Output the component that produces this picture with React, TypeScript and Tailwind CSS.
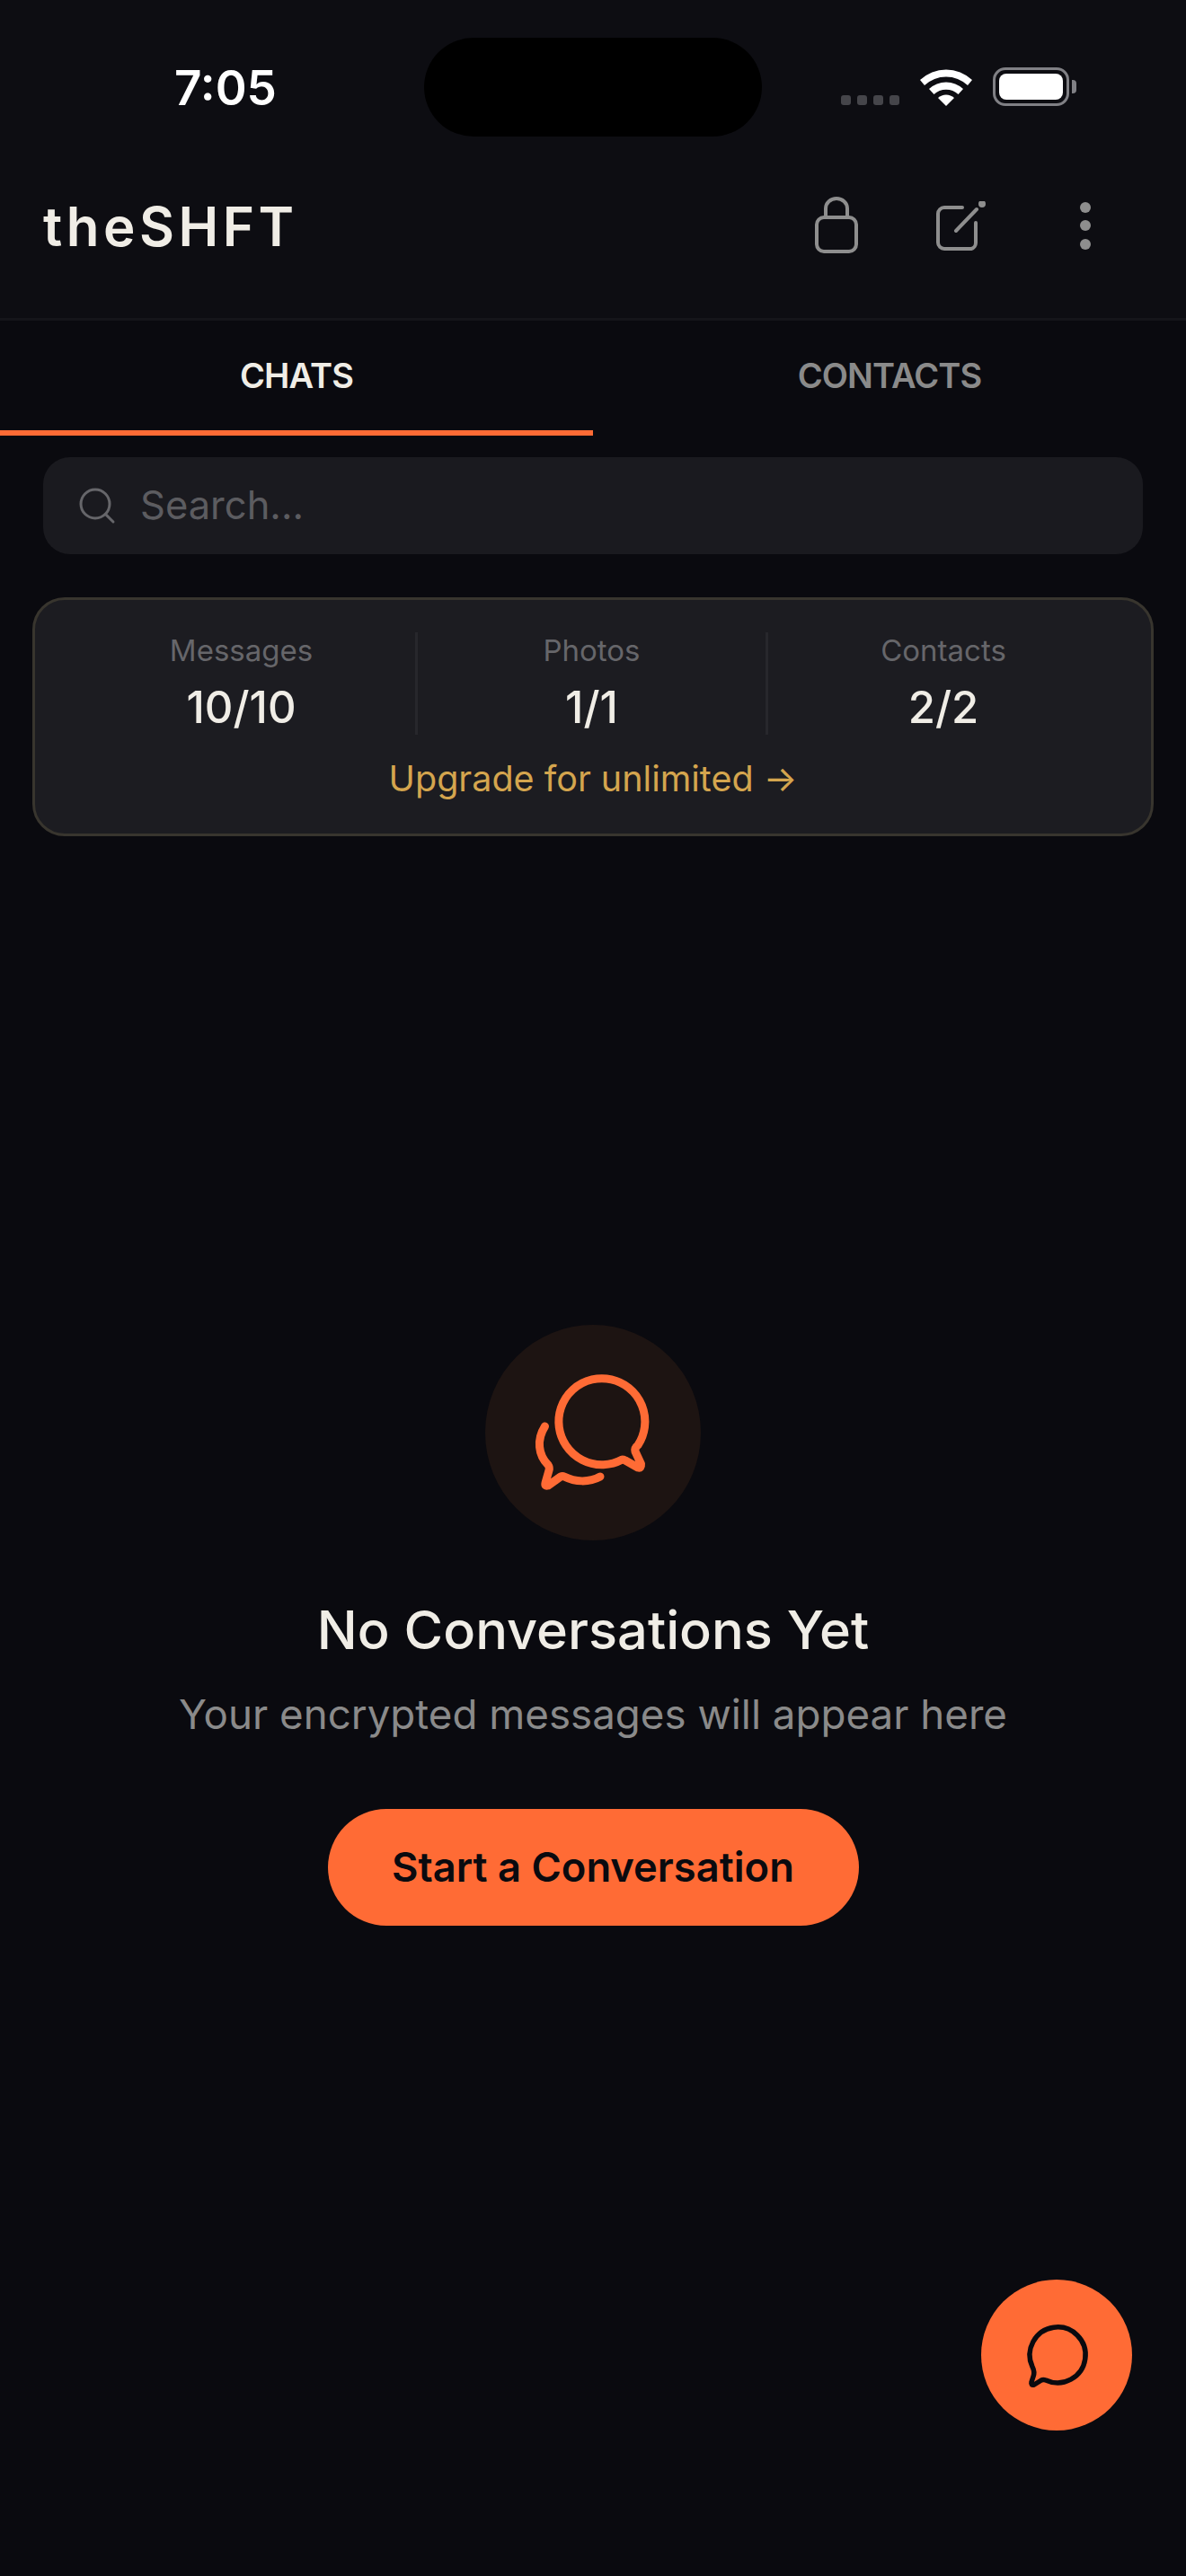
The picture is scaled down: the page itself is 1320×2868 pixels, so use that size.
import React from "react";
import { Search } from "lucide-react";

const StatusBar = () => (
  <div className="relative flex h-[168px] items-start justify-between">
    <span className="ml-[194px] mt-[66px] text-[53px] font-semibold leading-[64px] text-white">
      7:05
    </span>
    <div className="absolute left-[472px] top-[42px] h-[110px] w-[376px] rounded-[55px] bg-black" />
    <div className="mr-[122px] mt-[75px] flex items-start">
      <div className="mr-[23px] mt-[31px] flex gap-[7px]">
        {[0, 1, 2, 3].map((i) => (
          <div key={i} className="h-[11px] w-[11px] rounded-[3px] bg-[#45454a]" />
        ))}
      </div>
      <svg width="58" height="43" viewBox="0 0 58 43" className="mr-[23px]">
        <path d="M0 14 A42 42 0 0 1 58 14 L53 20 A35 35 0 0 0 5 20 Z" fill="#fff" />
        <path d="M10 24 A28 28 0 0 1 48 24 L42.5 30 A20 20 0 0 0 15.500 30 Z" fill="#fff" />
        <path d="M20 34 A13 13 0 0 1 38 34 L29 43 Z" fill="#fff" />
      </svg>
      <div className="flex h-[43px] w-[85px] items-center justify-center rounded-[14px] border-[3px] border-[#808085]">
        <div className="h-[29px] w-[71px] rounded-[8px] bg-white" />
      </div>
      <div className="ml-[3px] mt-[14px] h-[15px] w-[5px] rounded-r-[4px] bg-[#808085]" />
    </div>
  </div>
);

const HeaderIcons = () => (
  <div className="mr-[106px] flex items-start">
    <svg width="48" height="64" viewBox="0 0 48 64" fill="none" stroke="#8e8e8e" strokeWidth="4" className="mt-[-3px]">
      <rect x="2" y="23" width="44" height="38" rx="8" />
      <path d="M12 23 V13 A12 11 0 0 1 36 13 V23" />
    </svg>
    <svg width="56" height="56" viewBox="0 0 56 56" fill="none" stroke="#8e8e8e" strokeWidth="4" strokeLinecap="round" className="ml-[86px] mt-[2px]">
      <path d="M30 7 H10 A7 7 0 0 0 3 14 V46 A7 7 0 0 0 10 53 H40 A7 7 0 0 0 45 46 V24" />
      <path d="M23 33 L46 9" />
      <circle cx="52" cy="3" r="2" fill="#8e8e8e" />
    </svg>
    <div className="ml-[105px] mt-[3px] flex flex-col gap-[8.500px]">
      {[0, 1, 2].map((i) => (
        <div key={i} className="h-[12px] w-[12px] rounded-full bg-[#8e8e8e]" />
      ))}
    </div>
  </div>
);

const Stat = ({ label, value, last }: { label: string; value: string; last?: boolean }) => (
  <div className={`flex h-[114px] flex-col items-center ${last ? "" : "border-r-[3px] border-[#27272c]"}`}>
    <span className="text-[33px] leading-[40px] text-[#66666a]">{label}</span>
    <span className="mt-[14px] text-[49px] font-medium leading-[60px] text-[#f0ede6]">{value}</span>
  </div>
);

export default function App() {
  return (
    <div className="relative min-h-[2868px] w-[1320px] bg-[#0a0a0f] font-['Inter','Liberation_Sans',sans-serif]">
      <div className="border-b-[3px] border-[#15151a] bg-[#0d0d12]">
        <StatusBar />
        <div className="flex h-[186px] items-center justify-between pb-[18px]">
          <span className="ml-[48px] text-[60px] font-semibold leading-[72px] tracking-[4.500px] text-[#f0ede6]">
            theSHFT
          </span>
          <HeaderIcons />
        </div>
      </div>

      <div className="flex h-[128px]">
        <div className="flex w-[660px] justify-center border-b-[6px] border-[#ff6b35] pt-[36px]">
          <span className="text-[38px] font-semibold leading-[50px] tracking-[-0.900px] text-[#f0ede6]">CHATS</span>
        </div>
        <div className="flex w-[660px] justify-center pt-[36px]">
          <span className="text-[38px] font-semibold leading-[50px] tracking-[-0.900px] text-[#8a8a8a]">CONTACTS</span>
        </div>
      </div>

      <div className="mx-[48px] mt-[24px] flex h-[108px] items-center rounded-[30px] bg-[#1a1a1f] pl-[36px]">
        <Search size={48} strokeWidth={1.5} className="text-[#66666a]" />
        <span className="ml-[24px] text-[43.500px] text-[#5c5c60]">Search...</span>
      </div>

      <div className="mx-[36px] mt-[48px] h-[266px] rounded-[36px] border-[3px] border-[#38352e] bg-[#1c1c21] px-[36px] pt-[36px]">
        <div className="grid grid-cols-3">
          <Stat label="Messages" value="10/10" />
          <Stat label="Photos" value="1/1" />
          <Stat label="Contacts" value="2/2" last />
        </div>
        <p className="mt-[24px] text-center text-[39.500px] leading-[50px] text-[#d4a54e]">Upgrade for unlimited →</p>
      </div>

      <div className="mt-[544px] flex flex-col items-center">
        <div className="flex h-[240px] w-[240px] items-center justify-center rounded-full bg-[#1d1412]">
          <svg width="240" height="240" viewBox="20 15 240 240" fill="none" stroke="#ff6b35" strokeWidth="9" strokeLinecap="round" strokeLinejoin="round">
            <path d="M172.500 165 A48 48 0 1 1 190 149 Q186 152 187 156 L193.500 170 Q194 175 190 174 L176 166 Q174 165 172.500 165 Z" />
            <path d="M86.500 128 C77 143 79 160 90 171 Q92 174 91 177 L87 191 Q86 195 90 194 L104 184 Q106 183 108 184 C120 190 135 191 148 184" />
          </svg>
        </div>
        <h2 className="mt-[61px] text-[59.500px] font-medium leading-[76px] text-[#f0ede6]">No Conversations Yet</h2>
        <p className="mt-[27px] text-[45.700px] leading-[60px] text-[#8a8a8a]">Your encrypted messages will appear here</p>
        <button className="mt-[75px] flex h-[130px] w-[591px] items-center justify-center rounded-[65px] bg-[#ff6b35] text-[45.300px] font-semibold text-[#0a0a0f]">
          Start a Conversation
        </button>
      </div>

      <button className="absolute left-[1092px] top-[2538px] flex h-[168px] w-[168px] items-center justify-center rounded-full bg-[#ff6b35]">
        <svg width="168" height="168" viewBox="31 28 168 168" fill="none" stroke="#0a0a0f" strokeWidth="5.500" strokeLinecap="round" strokeLinejoin="round">
          <path d="M103 140 A31 31 0 1 0 88 125 Q91 131 89 136 L87 142 Q86 146 90 145 L98 140 Q100 139 103 140 Z" />
        </svg>
      </button>
    </div>
  );
}
